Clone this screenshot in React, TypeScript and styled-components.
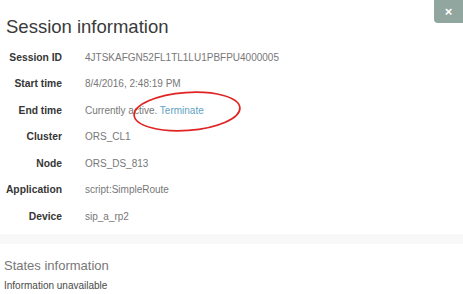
import React from "react";
import styled, { createGlobalStyle } from "styled-components";

const Global = createGlobalStyle`
  html, body { margin: 0; padding: 0; background: #fff; }
  body { font-family: "Liberation Sans", Arial, sans-serif; }
`;

const Modal = styled.div`
  position: relative;
  width: 463px;
  height: 294px;
  background: #fff;
  overflow: hidden;
`;

const Header = styled.div`
  display: flex;
  justify-content: space-between;
  align-items: flex-start;
  height: 44px;
`;

const Title = styled.h2`
  margin: 17px 0 0 6px;
  font-size: 18.5px;
  line-height: 20px;
  font-weight: normal;
  color: #3a3a3a;
`;

const Close = styled.button`
  width: 29px;
  height: 23px;
  border: none;
  border-radius: 0 0 0 4px;
  background: #91a69e;
  color: #fff;
  font-size: 13px;
  line-height: 23px;
  padding: 0;
  font-family: "Liberation Sans", Arial, sans-serif;
  font-weight: bold;
`;

const Details = styled.div`
  display: grid;
  grid-template-columns: 62px 1fr;
  column-gap: 23px;
  grid-auto-rows: 26.5px;
  align-items: center;
`;

const Label = styled.div`
  text-align: right;
  font-size: 10.3px;
  font-weight: bold;
  color: #363636;
  white-space: nowrap;
`;

const Value = styled.div`
  font-size: 10px;
  color: #777;
  white-space: nowrap;
`;

const Link = styled.span`
  color: #62a3c2;
`;

const Band = styled.div`
  height: 10px;
  margin-top: 4px;
  background: #f8f8f8;
`;

const States = styled.div`
  padding: 14px 0 0 4px;
  display: flex;
  flex-direction: column;
  gap: 7px;
`;

const StatesTitle = styled.div`
  font-size: 13px;
  line-height: 15px;
  color: #777;
`;

const Info = styled.div`
  font-size: 10px;
  line-height: 12px;
  color: #4a4a4a;
`;

const Annotation = styled.svg`
  position: absolute;
  left: 130px;
  top: 88px;
`;

const rows: [string, React.ReactNode][] = [
  ["Session ID", "4JTSKAFGN52FL1TL1LU1PBFPU4000005"],
  ["Start time", "8/4/2016, 2:48:19 PM"],
  [
    "End time",
    <>
      Currently active. <Link>Terminate</Link>
    </>,
  ],
  ["Cluster", "ORS_CL1"],
  ["Node", "ORS_DS_813"],
  ["Application", "script:SimpleRoute"],
  ["Device", "sip_a_rp2"],
];

export default function App() {
  return (
    <>
      <Global />
      <Modal>
        <Header>
          <Title>Session information</Title>
          <Close>×</Close>
        </Header>
        <Details>
          {rows.map(([l, v]) => (
            <React.Fragment key={l}>
              <Label>{l}</Label>
              <Value>{v}</Value>
            </React.Fragment>
          ))}
        </Details>
        <Band />
        <States>
          <StatesTitle>States information</StatesTitle>
          <Info>Information unavailable</Info>
        </States>
        <Annotation width="116" height="48" viewBox="0 0 116 48">
          <ellipse
            cx="57"
            cy="23.5"
            rx="53"
            ry="19"
            fill="none"
            stroke="#e02424"
            strokeWidth="1.7"
            transform="rotate(-4 57 23.5)"
          />
        </Annotation>
      </Modal>
    </>
  );
}
